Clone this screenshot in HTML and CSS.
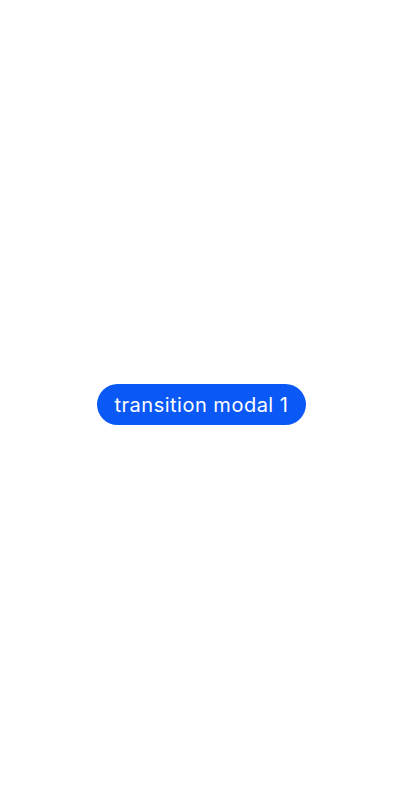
FILE: index.html
```html
<!DOCTYPE html>
<html>
<head>
<meta charset="utf-8">
<link rel="stylesheet" href="styles.css">
</head>
<body>
<main class="screen">
  <button class="btn">transition modal 1</button>
</main>
</body>
</html>
```
FILE: styles.css
```css
html, body {
  margin: 0;
  padding: 0;
  background: #ffffff;
}
.screen {
  width: 405px;
  height: 800px;
  display: flex;
  align-items: center;
  justify-content: center;
  padding-top: 9px;
  padding-right: 2px;
  box-sizing: border-box;
}
.btn {
  height: 41px;
  width: 209px;
  border: none;
  border-radius: 21px;
  background: #0a59f7;
  color: #ffffff;
  font-family: Inter, "Noto Sans", sans-serif;
  font-size: 20px;
  font-weight: 400;
  letter-spacing: 0.5px;
  padding: 0;
}
```
